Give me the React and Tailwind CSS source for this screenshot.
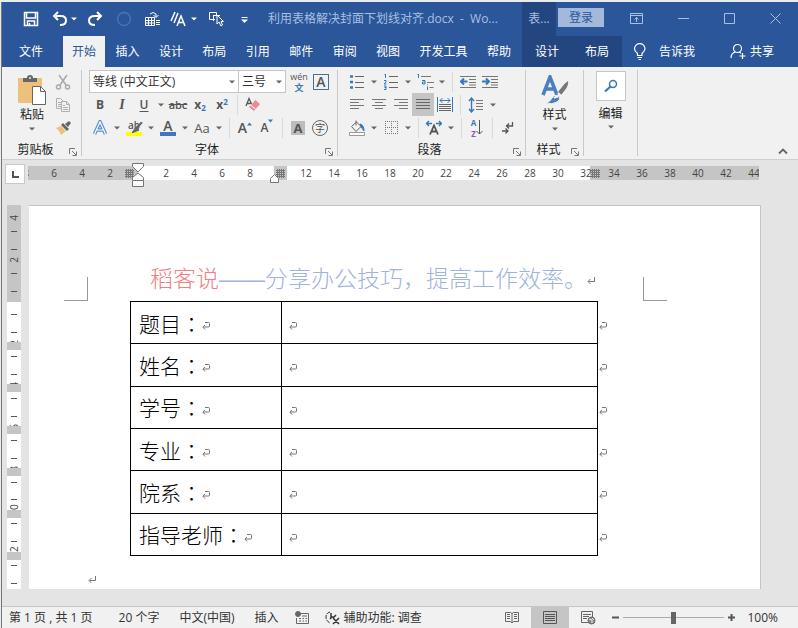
import React, { useState } from "react";

const Caret = ({ className = "text-[#666]" }) => (
  <svg width="6" height="4" viewBox="0 0 6 4" className={className}>
    <path d="M0 0.5h6L3 3.5z" fill="currentColor" />
  </svg>
);

const CaretButton = ({ label }) => (
  <button aria-label={label} className="flex h-[22px] w-3 items-center justify-center">
    <Caret />
  </button>
);

const Tool = ({ label, active, children }) => (
  <button
    aria-label={label}
    className={`flex h-[23px] w-[22px] shrink-0 items-center justify-center text-[#555] ${
      active ? "bg-[#c5c5c5]" : ""
    }`}
  >
    {children}
  </button>
);

const Divider = () => <span className="mx-1 h-5 w-px bg-[#d8d8d8]" />;

const Row = ({ children }) => <div className="flex h-[23px] items-center">{children}</div>;

const Icon = ({ w = 16, h = 16, children }) => (
  <svg width={w} height={h} viewBox={`0 0 ${w} ${h}`} fill="none" stroke="currentColor">
    {children}
  </svg>
);

const Group = ({ title, launcher = true, className, children }) => (
  <section className={`flex h-[86px] flex-col border-r border-[#c9c9c9] ${className}`}>
    <div className="h-[69px] shrink-0">{children}</div>
    <div className="flex h-[22px] shrink-0 items-center pr-1">
      <span className="flex-1 text-center">{title}</span>
      {launcher && (
        <button aria-label={`${title}设置`} className="mt-1 text-[#777]">
          <Icon w={8} h={8}>
            <path d="M0.5 6V0.5H6M3 3l4 4M7.5 3.5v4h-4" />
          </Icon>
        </button>
      )}
    </div>
  </section>
);

const DropDown = ({ label, value, className }) => (
  <div className={`relative ${className}`}>
    <select
      aria-label={label}
      className="h-[23px] w-full appearance-none border border-[#c6c6c6] bg-white pl-[3px] leading-[20px] text-[#333]"
    >
      <option>{value}</option>
    </select>
    <span className="pointer-events-none absolute right-1 top-[10px]">
      <Caret />
    </span>
  </div>
);

const ReturnMark = () => (
  <svg width="8" height="8" viewBox="0 0 8 8" fill="none" stroke="#777" className="inline-block">
    <path d="M7.5 0v4.5H1.5M3.5 2L1 4.5 3.5 7" />
  </svg>
);

const CellMark = () => (
  <svg width="8" height="8" viewBox="0 0 8 8" fill="none" stroke="#777" className="inline-block">
    <path d="M3 0.5h3.500q1 0 1 1V4q0 1-1 1H1M3 3L0.800 5 3 7.500" />
  </svg>
);

const HashMark = () => (
  <Icon w={9} h={9}>
    <path d="M1.500 0v9M3.500 0v9M5.500 0v9M7.500 0v9M0 1.500h9M0 3.500h9M0 5.500h9M0 7.500h9" stroke="#777" />
  </Icon>
);

const menuTabs = ["开始", "插入", "设计", "布局", "引用", "邮件", "审阅", "视图", "开发工具", "帮助"];

const TitleBar = () => (
  <>
    <div className="flex h-[34px] min-w-0 items-center bg-[#2b579a] pl-[21px] text-white">
      <button aria-label="保存" className="mr-[13px]">
        <Icon>
          <path d="M1.500 1.500h13v13h-13zM3.500 2v5h9V2M4.500 14v-4h7v4M6.500 12v2" strokeWidth="1.500" />
        </Icon>
      </button>
      <button aria-label="撤消" className="mr-[3px]">
        <Icon>
          <path d="M6 1L2 5l4 4M2 5h7q5 0 5 4.500T8 14" strokeWidth="2" />
        </Icon>
      </button>
      <button aria-label="撤消列表" className="mr-[10px]">
        <Caret className="text-white" />
      </button>
      <button aria-label="恢复" className="mr-[13px]">
        <Icon>
          <path d="M10 1l4 4-4 4M14 5H8Q2 5 2 9.500T8 14" strokeWidth="2" />
        </Icon>
      </button>
      <button aria-label="录制" className="mr-3 text-[#4a76bd]">
        <Icon>
          <circle cx="8" cy="8" r="6.500" strokeWidth="1.300" />
        </Icon>
      </button>
      <button aria-label="表格" className="mr-[9px]">
        <Icon w={17}>
          <path d="M1.500 6.500h9v8h-9zM1 9.500h10M1 12h10M4.500 7v7M7.500 7v7M12 9.500h4M12 11.500h4M12 13.500h4M6 3q3-3 6 0v3M9.500 4L12 6.500 14.500 4" />
        </Icon>
      </button>
      <button aria-label="字符样式" className="mr-1">
        <Icon w={17}>
          <path d="M1 10L5 1M4 12L8 2M7 15l4-10 4 10M8.500 11.500h5" strokeWidth="1.500" />
        </Icon>
      </button>
      <button aria-label="样式列表" className="mr-[11px]">
        <Caret className="text-white" />
      </button>
      <button aria-label="选择对象" className="mr-4">
        <Icon w={17}>
          <path d="M7 8.500H1.500v-7h7V4M5 4.500h7M5.500 4v6" />
          <path d="M9 4v9l2-2 2 4 1.500-1-1.500-3.500h2.500z" />
        </Icon>
      </button>
      <button aria-label="自定义快速访问工具栏" className="mr-5">
        <Icon w={7} h={7}>
          <path d="M0.500 1.500h6" />
          <path d="M0 3.500h7L3.500 7z" fill="currentColor" stroke="none" />
        </Icon>
      </button>
      <h1 className="truncate whitespace-pre text-[#a9bfe3]">利用表格解决封面下划线对齐.docx  -  Wo...</h1>
    </div>
    <div className="flex h-[34px] items-center bg-[#2b579a] text-[#a9bfe3]">
      <span className="flex h-full w-[34px] items-center justify-center bg-[#234680]">表...</span>
      <button className="mb-[3px] ml-[2px] h-[19px] w-[46px] bg-[#a3b9dc] text-[#2b579a]">登录</button>
      <div className="mb-[2px] flex flex-1 items-center justify-between pl-[26px] pr-[17px]">
        <button aria-label="功能区显示选项">
          <Icon w={13} h={11}>
            <path d="M0.500 0.500h12v10h-12zM0.500 2.500h12M6.500 9V4.500M4.500 6.500l2-2 2 2" />
          </Icon>
        </button>
        <button aria-label="最小化">
          <Icon w={11} h={11}>
            <path d="M0 5.500h11" />
          </Icon>
        </button>
        <button aria-label="最大化">
          <Icon w={11} h={11}>
            <path d="M0.500 0.500h10v10h-10z" />
          </Icon>
        </button>
        <button aria-label="关闭">
          <Icon w={11} h={11}>
            <path d="M0.500 0.500l10 10M10.500 0.500l-10 10" />
          </Icon>
        </button>
      </div>
    </div>
  </>
);

const MenuBar = ({ tab, onSelect }) => (
  <>
    <nav className="flex h-[31px] bg-[#2b579a] pr-[2px] text-white">
      <button className="w-[61px] pr-[3px]">文件</button>
      <div className="flex flex-1 justify-between">
        {menuTabs.map((name) => (
          <button
            key={name}
            onClick={() => onSelect(name)}
            className={`whitespace-nowrap px-[9px] ${tab === name ? "bg-[#f1f1f1] text-[#2b579a]" : ""}`}
          >
            {name}
          </button>
        ))}
      </div>
    </nav>
    <nav className="flex h-[31px] items-center bg-[#2b579a] text-white">
      <div className="flex h-full w-[100px] items-center justify-around bg-[#234680]">
        <button>设计</button>
        <button>布局</button>
      </div>
      <button className="ml-[11px] flex items-center gap-3">
        <Icon w={14} h={17}>
          <path d="M4.500 12.500v-2Q1.500 8 1.500 5.800a5 5 0 0 1 10.500 0Q12 8 9 10.500v2zM4.500 14.500h4.500M5.500 16.500h2.500" strokeWidth="1.200" />
        </Icon>
        告诉我
      </button>
      <button className="ml-auto mr-6 flex items-center gap-1">
        <Icon w={16} h={17}>
          <circle cx="7.500" cy="5.500" r="4" strokeWidth="1.200" />
          <path d="M1 15q0-5 4.500-6M9 9q1.500 0.500 2 1.500M12.500 10v6M9.500 13h6" strokeWidth="1.200" />
        </Icon>
        共享
      </button>
    </nav>
  </>
);

const Ribbon = () => (
  <div className="flex h-[93px] items-start border-b border-[#cfcfcf] bg-[#f1f1f1] pt-[3px] text-[#222]">
    <Group title="剪贴板" className="w-20">
      <div className="flex h-full pl-[16px]">
        <button className="flex w-7 flex-col items-center pt-[5px]">
          <svg width="28" height="30" viewBox="0 0 28 30">
            <rect x="0" y="3" width="24" height="25" rx="1" fill="#edc07c" />
            <path d="M5 7V3h4q0-3 3-3t3 3h4v4z" fill="#666" />
            <circle cx="12" cy="3" r="1" fill="#f1f1f1" />
            <path d="M14.500 11.500h8l5 5v13h-13z" fill="#fff" stroke="#666" />
            <path d="M22.500 11.500v5h5" fill="none" stroke="#666" />
          </svg>
          <span className="whitespace-nowrap leading-5">粘贴</span>
          <span className="mt-[2px] flex">
            <Caret />
          </span>
        </button>
        <div className="ml-[6px]">
          <Tool label="剪切">
            <Icon>
              <g stroke="#aaa" strokeWidth="1.500">
                <path d="M4 1l7 10M12 1L5 11" />
                <circle cx="3.500" cy="13" r="2" />
                <circle cx="12.500" cy="13" r="2" />
              </g>
            </Icon>
          </Tool>
          <Tool label="复制">
            <Icon>
              <g stroke="#b0b0b0">
                <path d="M6 11.500H1.500v-10h4l3 3M3 5.500h3M3 7.500h3M3 9.500h3" />
                <path d="M6.500 4.500h5l3 3v7h-8zM11.500 4.500v3h3M8 8.500h2M8 10.500h5M8 12.500h5" />
              </g>
            </Icon>
          </Tool>
          <Tool label="格式刷">
            <svg width="16" height="16" viewBox="0 0 16 16">
              <path d="M1 8l5-2 5 5-5 4q-1-4-5-7z" fill="#edc07c" />
              <path d="M6 5l2-2 6 6-2 2zM10 4l4-3 2 2-3 4z" fill="#666" />
            </svg>
          </Tool>
        </div>
      </div>
    </Group>

    <Group title="字体" className="w-[256px] pl-[7px]">
      <Row>
        <DropDown label="字体名称" value="等线 (中文正文)" className="w-[150px]" />
        <DropDown label="字号" value="三号" className="-ml-px mr-[2px] w-12" />
        <Tool label="拼音指南">
          <span className="flex flex-col items-center text-[9px] leading-[11px]">
            <span>wén</span>
            <b className="text-[#3a78b5]">文</b>
          </span>
        </Tool>
        <Tool label="字符边框">
          <span className="flex size-4 items-center justify-center border border-[#41719c] text-[14px] font-semibold leading-none">
            A
          </span>
        </Tool>
      </Row>
      <Row>
        <Tool label="加粗">
          <b>B</b>
        </Tool>
        <Tool label="倾斜">
          <i className="font-['Liberation_Serif',serif] text-[14px] font-bold">I</i>
        </Tool>
        <Tool label="下划线">
          <span className="font-semibold underline underline-offset-2">U</span>
        </Tool>
        <CaretButton label="下划线样式" />
        <Tool label="删除线">
          <span className="text-[11px] font-semibold line-through">abc</span>
        </Tool>
        <Tool label="下标">
          <b>
            x<sub className="text-[8px] text-[#3a78b5]">2</sub>
          </b>
        </Tool>
        <Tool label="上标">
          <b>
            x<sup className="text-[8px] text-[#3a78b5]">2</sup>
          </b>
        </Tool>
        <Divider />
        <Tool label="清除格式">
          <svg width="16" height="16" viewBox="0 0 16 16">
            <path d="M1 9L4 1.500 6.500 7M2.500 6.500h3" fill="none" stroke="#555" strokeWidth="1.300" />
            <path d="M10.500 3L15 7l-6 7-5-4z" fill="#e98a98" />
            <path d="M5.500 8l5 4" stroke="#fff" />
          </svg>
        </Tool>
      </Row>
      <Row>
        <Tool label="文本效果">
          <Icon>
            <path d="M2.500 14L8 2 13.500 14M4.500 10h7" stroke="#5b8fca" strokeWidth="3.600" />
            <path d="M2.500 14L8 2 13.500 14M4.500 10h7" stroke="#fff" strokeWidth="1.200" />
          </Icon>
        </Tool>
        <CaretButton label="文本效果列表" />
        <Tool label="突出显示">
          <span className="relative flex h-4 w-4 flex-col justify-between text-[10px] font-semibold leading-[10px]">
            ab
            <span className="h-1 w-4 bg-[#ffff00]" />
            <svg width="11" height="11" viewBox="0 0 11 11" className="absolute -right-px top-[2px]">
              <path d="M10 0L4 7M5 5L1 10l5-2z" stroke="#666" strokeWidth="2" fill="#666" />
            </svg>
          </span>
        </Tool>
        <CaretButton label="突出显示颜色" />
        <Tool label="字体颜色">
          <span className="flex w-4 flex-col items-center text-[14px] font-semibold leading-[12px]">
            A
            <span className="h-1 w-4 bg-[#4472c4]" />
          </span>
        </Tool>
        <CaretButton label="字体颜色列表" />
        <Tool label="更改大小写">
          <span className="text-[13px]">Aa</span>
        </Tool>
        <CaretButton label="大小写列表" />
        <Divider />
        <Tool label="增大字号">
          <span className="flex text-[14px] font-semibold">
            A
            <svg width="5" height="4" viewBox="0 0 5 4" className="mt-[3px]">
              <path d="M0 3.500L2.500 0.500 5 3.500z" fill="#3a78b5" />
            </svg>
          </span>
        </Tool>
        <Tool label="减小字号">
          <span className="flex text-[12px] font-semibold">
            A
            <svg width="5" height="4" viewBox="0 0 5 4">
              <path d="M0 0.500h5L2.500 3.500z" fill="#3a78b5" />
            </svg>
          </span>
        </Tool>
        <Divider />
        <Tool label="字符底纹">
          <span className="w-[14px] bg-[#bdbdbd] text-center text-[13px] font-bold leading-[14px]">A</span>
        </Tool>
        <Tool label="带圈字符">
          <span className="flex size-4 items-center justify-center rounded-full border border-[#666] text-[10px] leading-none">
            字
          </span>
        </Tool>
      </Row>
    </Group>

    <Group title="段落" className="w-[188px] pl-2">
      <Row>
        <Tool label="项目符号">
          <Icon>
            <path d="M1 2.500h3M1 8h3M1 13.500h3" stroke="#3a78b5" strokeWidth="2.500" />
            <path d="M6 2.500h9M6 8.500h9M6 13.500h9" stroke="#666" />
          </Icon>
        </Tool>
        <CaretButton label="项目符号库" />
        <Tool label="编号">
          <Icon>
            <path d="M1.500 1L2.500 0v4M1 6.500h2v1.500L1 10h2.500M1 12h2v3.500H1M1.500 13.500H3" stroke="#3a78b5" />
            <path d="M6 2.500h9M6 8.500h9M6 13.500h9" stroke="#666" />
          </Icon>
        </Tool>
        <CaretButton label="编号库" />
        <Tool label="多级列表">
          <Icon w={17}>
            <path d="M0.500 1L1.500 0v4M5 6.500h3v3.500H5.500V8H8M10.500 10.500v0.800M10.500 12.500V16" stroke="#3a78b5" />
            <path d="M4 2.500h10M10 8.500h7M12.500 13.500h4" stroke="#777" />
          </Icon>
        </Tool>
        <CaretButton label="多级列表库" />
        <Divider />
        <Tool label="减少缩进量">
          <Icon>
            <path d="M0 2.500h16M9 5.500h7M9 8.500h7M0 13.500h16M9 11h7" stroke="#777" />
            <path d="M7.500 7.500H1.500M4 4.500L1 7.500l3 3" stroke="#3a78b5" strokeWidth="2" />
          </Icon>
        </Tool>
        <Tool label="增加缩进量">
          <Icon>
            <path d="M0 2.500h16M9 5.500h7M9 8.500h7M0 13.500h16M9 11h7" stroke="#777" />
            <path d="M0 7.500h6M4 4.500l3 3-3 3" stroke="#3a78b5" strokeWidth="2" />
          </Icon>
        </Tool>
      </Row>
      <Row>
        <Tool label="左对齐">
          <Icon w={14} h={13}>
            <path d="M0 1.500h14M0 4.500h9M0 7.500h14M0 10.500h9" stroke="#777" />
          </Icon>
        </Tool>
        <Tool label="居中">
          <Icon w={14} h={13}>
            <path d="M0 1.500h14M3 4.500h8M0 7.500h14M3 10.500h8" stroke="#777" />
          </Icon>
        </Tool>
        <Tool label="右对齐">
          <Icon w={14} h={13}>
            <path d="M0 1.500h14M5 4.500h9M0 7.500h14M5 10.500h9" stroke="#777" />
          </Icon>
        </Tool>
        <Tool label="两端对齐" active>
          <Icon w={14} h={13}>
            <path d="M0 1.500h14M0 4.500h14M0 7.500h14M0 10.500h14" stroke="#666" />
          </Icon>
        </Tool>
        <Tool label="分散对齐">
          <Icon>
            <path d="M0.500 0v15M15.500 0v15M3 3.500h10M5.500 1L3 3.500 5.500 6M10.500 1L13 3.500 10.500 6" stroke="#3a78b5" />
            <path d="M2 7.500h12M2 9.500h12M2 11.500h12M2 13.500h12" stroke="#666" />
          </Icon>
        </Tool>
        <Divider />
        <Tool label="行距">
          <Icon>
            <path d="M3.500 1v14M1 4l2.500-3L6 4M1 12l2.500 3L6 12" stroke="#3a78b5" strokeWidth="1.400" />
            <path d="M8 3.500h7M8 6.500h7M8 9.500h7M8 12.500h7" stroke="#777" />
          </Icon>
        </Tool>
        <CaretButton label="行距列表" />
      </Row>
      <Row>
        <Tool label="底纹">
          <Icon>
            <path d="M7 0.500v5M2.500 6.500L7.500 2 12 6.500l-5 5z" stroke="#666" />
            <path d="M11 4q4 1 4 7-2-3-3-4z" fill="#3a78b5" stroke="#3a78b5" />
            <path d="M0.500 12.500h15v3h-15z" stroke="#999" fill="#fff" />
          </Icon>
        </Tool>
        <CaretButton label="底纹颜色" />
        <Tool label="边框">
          <Icon w={13} h={13}>
            <path d="M0 0.500h13M0 6.500h13M0 12.500h13M0.500 0v13M6.500 0v13M12.500 0v13" stroke="#777" strokeDasharray="1 1" />
          </Icon>
        </Tool>
        <CaretButton label="边框列表" />
        <Divider />
        <Tool label="中文版式">
          <Icon>
            <path d="M4 14.500L8 5.500l4 9M5 11.500h6" stroke="#555" strokeWidth="1.800" />
            <path d="M0.500 3.500H6M3 1L0.500 3.500 3 6M15.500 3.500H10M13 1l2.500 2.500L13 6" stroke="#3a78b5" strokeWidth="1.400" />
          </Icon>
        </Tool>
        <CaretButton label="中文版式列表" />
        <Divider />
        <Tool label="排序">
          <span className="flex items-center">
            <span className="flex flex-col text-[8px] font-bold leading-[11px]">
              <span className="text-[#3a78b5]">A</span>
              <span className="text-[#9b4fb5]">Z</span>
            </span>
            <Icon w={7} h={15}>
              <path d="M3.500 0v14M0.500 11l3 3 3-3" />
            </Icon>
          </span>
        </Tool>
        <Divider />
        <Tool label="显示编辑标记">
          <Icon w={12} h={13}>
            <path d="M10.500 1v4H5M7 2.500L4.500 5 7 7.500M0 10h6M3.500 7.500L6 10l-2.500 2.500" strokeWidth="1.300" />
          </Icon>
        </Tool>
      </Row>
    </Group>

    <Group title="样式" className="w-[58px]">
      <button className="flex w-full flex-col items-center pt-[5px]">
        <svg width="28" height="30" viewBox="0 0 28 30" fill="none">
          <path d="M2 20L9 2l7 18M4.500 14h9" stroke="#4a80bd" strokeWidth="3.500" />
          <path d="M27 6q1 4-3 9l-4 5-3-3 4-5q3-4 6-6z" fill="#777" />
          <path d="M17 18l3 3" stroke="#f1f1f1" strokeWidth="2" />
          <path d="M5 28q4-1 6-5t7-2q2 4-2 6-5 3-11 1z" fill="#4a80bd" stroke="#f1f1f1" />
          <path d="M13 23q2-2 4-1" stroke="#fff" strokeWidth="2" />
        </svg>
        <span className="leading-5">样式</span>
        <span className="mt-[2px] flex">
          <Caret />
        </span>
      </button>
    </Group>

    <Group title="" launcher={false} className="w-[54px]">
      <button className="flex w-full flex-col items-center pt-px">
        <span className="flex size-[30px] items-center justify-center border border-[#c6c6c6] bg-white text-[#3a78b5]">
          <Icon w={14} h={14}>
            <circle cx="9" cy="5" r="3.500" strokeWidth="1.500" />
            <path d="M6.500 7.500L1 12.500" strokeWidth="2.200" />
          </Icon>
        </span>
        <span className="mt-[3px] leading-5">编辑</span>
        <span className="mt-px flex">
          <Caret />
        </span>
      </button>
    </Group>

    <button aria-label="折叠功能区" className="mb-1 ml-auto mr-[10px] mt-auto text-[#666]">
      <Icon w={10} h={7}>
        <path d="M1 5.500l4-4 4 4" strokeWidth="1.800" />
      </Icon>
    </button>
  </div>
);

const rulerLabels = ["8", "6", "4", "2", "", "2", "4", "6", "8", "", "12", "14", "16", "18", "20", "22", "24", "26", "28", "30", "32", "34", "36", "38", "40", "42", "44"];

const HorizontalRuler = () => (
  <div className="flex h-[45px] items-start pt-1">
    <button aria-label="制表符" className="ml-[3px] flex size-5 items-center justify-center border border-[#c9c9c9] bg-white text-[#555]">
      <Icon w={7} h={7}>
        <path d="M1 0v6h6" strokeWidth="2" />
      </Icon>
    </button>
    <div className="ml-[3px] mr-[39px] mt-[2px] grid flex-1 overflow-x-clip">
      <div className="flex h-[14px] bg-white [grid-area:1/1]">
        <div className="flex w-[110px] items-center justify-end bg-[#c5c5c5] pr-1">
          <HashMark />
        </div>
        <div className="w-[136px]" />
        <div className="flex w-[13px] items-center justify-center bg-[#c5c5c5]">
          <HashMark />
        </div>
        <div className="w-[303px]" />
        <div className="flex flex-1 items-center bg-[#c5c5c5] pl-px">
          <HashMark />
        </div>
      </div>
      <div className="-ml-4 flex w-0 text-[10px] leading-[14px] text-[#444] [grid-area:1/1]">
        {rulerLabels.map((label, i) => (
          <span key={i} className="relative w-7 shrink-0 text-center">
            {label}
            {i === 4 && (
              <svg width="12" height="25" viewBox="0 0 12 25" fill="#fff" stroke="#777" className="absolute -top-[3px] left-2">
                <path d="M0.500 0.500h11v3L6 9 0.500 3.500zM0.500 17.500v-3L6 10l5.500 4.500v3zM0.500 17.500h11v6h-11z" />
              </svg>
            )}
            {i === 9 && (
              <svg width="9" height="9" viewBox="0 0 9 9" fill="#fff" stroke="#777" className="absolute left-[6px] top-2">
                <path d="M0.500 8.500v-4l4-4 4 4v4z" />
              </svg>
            )}
          </span>
        ))}
      </div>
    </div>
  </div>
);

const verticalLabels = ["4", "2", "", "2", "4", "6", "8", "10", "12"];

const VerticalRuler = () => (
  <div className="grid w-[14px] bg-white text-[10px] text-[#444]">
    <div className="h-[97px] bg-[#c5c5c5] [grid-area:1/1]" />
    <div className="flex flex-col pt-2 [grid-area:1/1]">
      {verticalLabels.map((label, i) => (
        <div key={i} className="flex flex-1 flex-col items-center justify-between">
          <span className="flex h-[10px] -rotate-90 items-center">{label}</span>
          <span className="h-px w-[6px] bg-[#555]" />
          <span className="h-px" />
          <span className="mb-[5px] h-px w-[6px] bg-[#555]" />
        </div>
      ))}
    </div>
    <div className="z-10 flex flex-col gap-[34px] pt-[137px] [grid-area:1/1]">
      {[1, 2, 3, 4, 5, 6].map((n) => (
        <div key={n} className="h-2 bg-[#c5c5c5]" />
      ))}
    </div>
  </div>
);

const fields = ["题目", "姓名", "学号", "专业", "院系", "指导老师"];

const DocumentPage = () => (
  <article className="ml-2 mr-[37px] flex-1 border-r border-t border-[#c4c4c4] bg-white font-['Noto_Sans_CJK_SC',sans-serif]">
    <div className="flex items-start pl-[35px] pr-[93px] pt-[54px]">
      <span className="mt-[17px] size-6 border-b border-r border-[#999]" />
      <h2 className="ml-[62px] whitespace-nowrap text-[23px] font-light leading-[34px] text-[#9fb3dc]">
        <span className="text-[#f37d82]">稻客说</span>
        <span className="font-['Liberation_Sans',sans-serif]">——</span>
        分享办公技巧，提高工作效率。
        <ReturnMark />
      </h2>
      <span className="ml-auto mt-[17px] size-6 border-b border-l border-[#999]" />
    </div>
    <table className="ml-[101px] h-[255px] border-collapse text-[21px] font-light leading-[30px] text-black">
      <tbody>
        {fields.map((field) => (
          <tr key={field}>
            <td className="w-[151px] border border-black py-[5px] pl-2">
              {field}
              <span lang="zh-TW">：</span>
              <CellMark />
            </td>
            <td className="w-[316px] border border-black pl-[7px]">
              <CellMark />
            </td>
            <td className="pl-px">
              <CellMark />
            </td>
          </tr>
        ))}
      </tbody>
    </table>
    <p className="pl-[59px] pt-3 leading-5">
      <ReturnMark />
    </p>
  </article>
);

const StatusBar = () => {
  const [zoom, setZoom] = useState(50);

  return (
    <footer className="flex h-[22px] items-center whitespace-nowrap border-t border-[#c6c6c6] bg-[#f1f1f1] pl-[7px] text-[#333]">
      <span className="mr-[26px]">第 1 页 , 共 1 页</span>
      <span className="mr-5">20 个字</span>
      <span className="mr-5">中文(中国)</span>
      <span className="mr-4">插入</span>
      <button aria-label="宏录制" className="mr-4 text-[#666]">
        <Icon w={14} h={13}>
          <path d="M5 2.500h8.500v10h-12V7M4 7.500h2M7.500 7.500h1.500M10.500 7.500h1.500M4 10h2M7.500 10h1.500M10.500 10h1.500M7 5h5" />
          <circle cx="3" cy="3" r="2.500" fill="currentColor" />
        </Icon>
      </button>
      <button className="flex items-center gap-[3px]">
        <Icon w={16} h={14}>
          <path d="M5 1Q1 2 1 6t4 6" strokeDasharray="4 1" />
          <path d="M6 2v5l-1 1M6 6h3l2-2M8 7l6 6M14 7l-6 6" strokeWidth="1.500" />
        </Icon>
        <span>辅助功能: 调查</span>
      </button>
      <div className="ml-auto flex h-full items-center">
        <button aria-label="阅读视图" className="mr-3 text-[#666]">
          <Icon w={14} h={13}>
            <path d="M7 2.500L5.500 1.500h-5v9h5L7 12l1.500-1.500h5v-9h-5zM7 2.500V12M2 3.500h3M2 5.500h3M2 7.500h3M9 3.500h3M9 5.500h3M9 7.500h3" />
          </Icon>
        </button>
        <button aria-label="页面视图" className="mr-3 flex h-full w-[38px] items-center justify-center bg-[#c5c5c5] text-[#555]">
          <Icon w={14} h={13}>
            <path d="M0.500 0.500h13v12h-13zM2 3.500h10M2 5.500h10M2 7.500h10M2 9.500h10" />
          </Icon>
        </button>
        <button aria-label="Web 版式视图" className="mr-4 text-[#666]">
          <Icon w={15} h={14}>
            <path d="M7 11.500H0.500v-11h11V6M2 3.500h8M2 5.500h6M2 7.500h4" />
            <circle cx="10.500" cy="9.500" r="3.500" fill="#888" />
            <path d="M8 8l3 1v3M11 7l2 2" stroke="#f1f1f1" />
          </Icon>
        </button>
        <button aria-label="缩小" className="text-[#555]">
          <Icon w={7} h={7}>
            <path d="M0 3.500h7" strokeWidth="2" />
          </Icon>
        </button>
        <input
          type="range"
          aria-label="显示比例"
          value={zoom}
          onChange={(e) => setZoom(e.target.value)}
          className="mx-1 h-3 w-[101px] appearance-none bg-[linear-gradient(#aaa,#aaa)] bg-[length:100%_1px] bg-center bg-no-repeat [&::-webkit-slider-thumb]:h-3 [&::-webkit-slider-thumb]:w-[5px] [&::-webkit-slider-thumb]:appearance-none [&::-webkit-slider-thumb]:bg-[#666]"
        />
        <button aria-label="放大" className="text-[#555]">
          <Icon w={7} h={7}>
            <path d="M0 3.500h7M3.500 0v7" strokeWidth="2" />
          </Icon>
        </button>
        <span className="ml-3 mr-5">100%</span>
      </div>
    </footer>
  );
};

const App = () => {
  const [tab, setTab] = useState("开始");

  return (
    <div className="flex min-h-screen flex-col bg-[#e8ebf0] pl-px pt-[2px] font-['Open_Sans','Noto_Sans_CJK_SC',sans-serif] text-[12px] leading-[18px]">
      <div className="flex flex-1 flex-col border-l border-[#777] bg-[#e4e4e4]">
        <header className="grid grid-cols-[minmax(0,1fr)_276px]">
          <TitleBar />
          <MenuBar tab={tab} onSelect={setTab} />
        </header>
        <Ribbon />
        <main className="flex flex-1 flex-col pb-[17px]">
          <HorizontalRuler />
          <div className="flex flex-1 pl-[5px]">
            <VerticalRuler />
            <DocumentPage />
          </div>
        </main>
        <StatusBar />
      </div>
    </div>
  );
};

export default App;
